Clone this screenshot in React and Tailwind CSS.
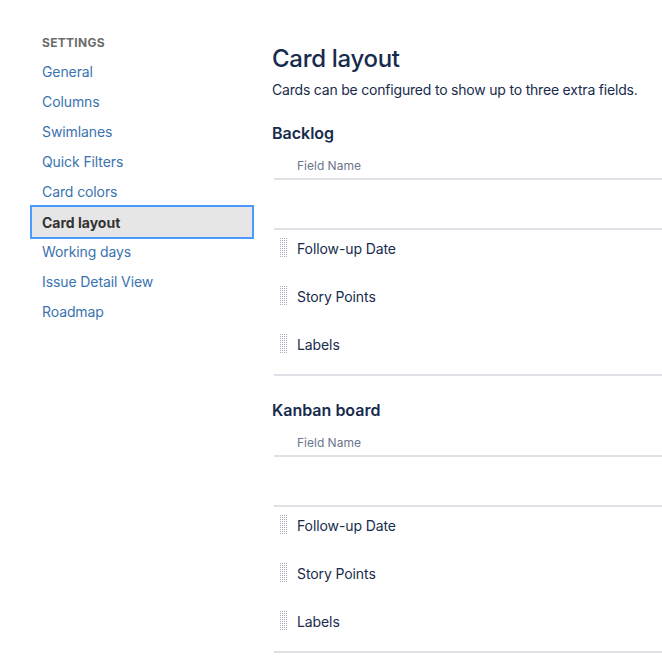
import React from "react";

const font = { fontFamily: 'Inter, "Noto Sans", "Liberation Sans", sans-serif' };

function Handle() {
  const dots = [];
  for (let r = 0; r < 10; r++) {
    for (let c = 0; c < 4; c++) {
      dots.push(<rect key={r + "-" + c} x={c * 2} y={r * 2} width="1" height="1" fill="#a5adba" />);
    }
  }
  return (
    <svg width="8" height="20" viewBox="0 0 8 20" className="shrink-0">
      {dots}
    </svg>
  );
}

const navItems = [
  "General",
  "Columns",
  "Swimlanes",
  "Quick Filters",
  "Card colors",
  "Card layout",
  "Working days",
  "Issue Detail View",
  "Roadmap",
];

function FieldTable() {
  const rows = ["Follow-up Date", "Story Points", "Labels"];
  return (
    <div className="ml-[2px]">
      <div className="h-[26px] flex items-center pl-[23px] text-[12px] text-[#6b778c] border-b-2 border-[#dfe1e6]">
        Field Name
      </div>
      <div className="h-[50px] border-b-2 border-[#dfe1e6]"></div>
      <div className="flex flex-col gap-[12px] pb-[12px] border-b-2 border-[#dfe1e6]">
        {rows.map((r) => (
          <div key={r} className="h-[36px] flex items-center pl-[6px]">
            <Handle />
            <span className="ml-[9px] text-[14px] tracking-[-0.1px] text-[#172b4d]">{r}</span>
          </div>
        ))}
      </div>
    </div>
  );
}

export default function App() {
  return (
    <div className="w-[662px] h-[666px] overflow-hidden bg-white flex" style={font}>
      <div className="w-[224px] ml-[30px] pt-[35px] shrink-0">
        <div className="h-[16px] leading-[16px] pl-[12px] text-[12px] font-bold tracking-[0.3px] text-[#6b6b6b] uppercase">
          Settings
        </div>
        <div className="mt-[5px] flex flex-col">
          {navItems.map((n) =>
            n === "Card layout" ? (
              <div
                key={n}
                className="h-[34px] mt-[-1px] mb-[-3px] relative z-10 flex items-center pl-[10px] bg-[#e6e6e6] border-2 border-[#4c9aff] text-[14px] font-bold text-[#333333]"
              >
                {n}
              </div>
            ) : (
              <div key={n} className="h-[30px] flex items-center pl-[12px] text-[14px] tracking-[-0.1px] text-[#3b73af]">
                {n}
              </div>
            )
          )}
        </div>
      </div>
      <div className="ml-[18px] flex-1 min-w-0 pt-[43px]">
        <h1 className="h-[32px] leading-[32px] text-[24px] font-medium text-[#172b4d] tracking-[-0.3px]">
          Card layout
        </h1>
        <p className="mt-[5px] h-[20px] leading-[20px] text-[14px] tracking-[-0.2px] text-[#172b4d] whitespace-nowrap">
          Cards can be configured to show up to three extra fields.
        </p>
        <h2 className="mt-[21px] h-[24px] leading-[24px] text-[16px] font-semibold text-[#172b4d]">Backlog</h2>
        <div className="mt-[9px]">
          <FieldTable />
        </div>
        <h2 className="mt-[22px] h-[24px] leading-[24px] text-[16px] font-semibold text-[#172b4d]">Kanban board</h2>
        <div className="mt-[9px]">
          <FieldTable />
        </div>
      </div>
    </div>
  );
}
